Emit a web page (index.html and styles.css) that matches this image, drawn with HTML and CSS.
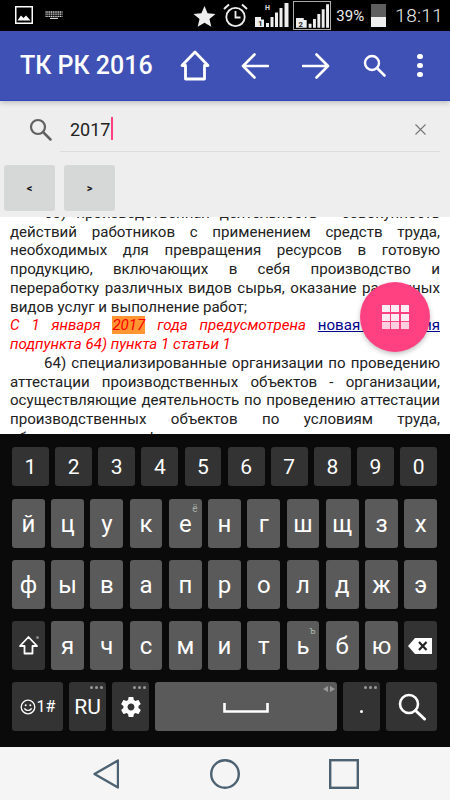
FILE: index.html
```html
<!DOCTYPE html>
<html lang="ru">
<head>
    <meta charset="UTF-8">
    <meta name="viewport" content="width=device-width, initial-scale=1.0">
    <title>ТК РК 2016</title>
    <link rel="stylesheet" href="styles.css">
</head>
<body>
    <div class="status">
        <svg class="st-pic" viewBox="0 0 18 18"><rect x="0.75" y="0.75" width="16.5" height="16.5" fill="none" stroke="#fff" stroke-width="1.5"/><path d="M2.5 14.5 L6 9.5 L8.5 12 L11 9.5 L15.5 14.5Z" fill="#fff"/></svg>
        <svg class="st-kbd" viewBox="0 0 18 8"><path d="M.5 1h17M.5 3.200h17M.5 5.400h17" stroke="#ddd" stroke-width="1.300" stroke-dasharray="1.200 .6"/><path d="M5 7.400h8" stroke="#ddd" stroke-width="1.100"/></svg>
        <div class="st-space"></div>
        <svg class="st-star" viewBox="0 0 24 24"><path d="M12 1 L15.2 8.6 L23.5 9.3 L17.2 14.7 L19.1 22.8 L12 18.5 L4.9 22.8 L6.8 14.7 L.5 9.3 L8.8 8.6Z" fill="#eee"/></svg>
        <svg class="st-alarm" viewBox="0 0 25 25"><circle cx="12.5" cy="14" r="9.2" fill="none" stroke="#eee" stroke-width="1.8"/><path d="M12.5 8v6.5h5" fill="none" stroke="#eee" stroke-width="1.8"/><path d="M1 6 L6 1.5M24 6 L19 1.5" stroke="#eee" stroke-width="2"/></svg>
        <svg class="st-sig" viewBox="0 0 34 24"><path d="M0 14h6v2.500h3V24H0z" fill="#eee"/><text x="3" y="23" class="st-simno">1</text><path d="M11 20h3v4h-3zM15.500 14h3v10h-3zM20 9.500h3V24h-3zM24.500 5h3v19h-3zM29.500 0h4v24h-4z" fill="#eee"/><text x="10" y="7" class="st-h">H</text></svg>
        <div class="st-box">
            <svg class="st-sig2" viewBox="0 0 34 24"><path d="M0 14h8v2h3v8H0z" fill="#eee"/><text x="2.500" y="23" class="st-simno">2</text><path d="M13 20h3v4h-3zM17.500 15h3v9h-3zM22 10h3v14h-3zM26.500 5h3v19h-3zM31 0h3v24h-3z" fill="#eee"/></svg>
        </div>
        <span class="st-pct">39%</span>
        <div class="st-batt"><div class="st-batt-top"></div><div class="st-batt-full"></div></div>
        <span class="st-time">18:11</span>
    </div>

    <div class="appbar">
        <span class="app-title">ТК РК 2016</span>
        <svg class="ic-home" viewBox="0 0 30 31"><path d="M15 2 L2 15.500 H5.500 V29 H24.500 V15.500 H28Z" fill="none" stroke="#fff" stroke-width="2.800" stroke-linejoin="round"/></svg>
        <svg class="ic-back" viewBox="0 0 28 26"><path d="M27 13H2M13.500 1.500 L2 13 L13.500 24.500" fill="none" stroke="#fff" stroke-width="2.600" stroke-linecap="round" stroke-linejoin="round"/></svg>
        <svg class="ic-fwd" viewBox="0 0 28 26"><path d="M1 13H26M14.500 1.500 L26 13 L14.500 24.500" fill="none" stroke="#fff" stroke-width="2.600" stroke-linecap="round" stroke-linejoin="round"/></svg>
        <svg class="ic-find" viewBox="0 0 23 23"><circle cx="9" cy="9" r="7" fill="none" stroke="#fff" stroke-width="2.400"/><path d="M14 14 L21.500 21.500" stroke="#fff" stroke-width="2.600" stroke-linecap="round"/></svg>
        <div class="dots"><i></i><i></i><i></i></div>
    </div>

    <div class="finder">
        <div class="find-row">
            <svg class="find-ic" viewBox="0 0 23 23"><circle cx="9" cy="9" r="7" fill="none" stroke="#616161" stroke-width="2.200"/><path d="M14 14 L21.500 21.500" stroke="#616161" stroke-width="2.500" stroke-linecap="round"/></svg>
            <div class="find-field">
                <span class="find-text">2017</span><span class="cursor"></span>
                <svg class="find-x" viewBox="0 0 11 11"><path d="M.5 .5 L10.500 10.500M10.500 .5 L.5 10.500" stroke="#757575" stroke-width="1.100"/></svg>
            </div>
        </div>
        <div class="find-btns">
            <div class="find-btn">&lt;</div>
            <div class="find-btn">&gt;</div>
        </div>
    </div>

    <div class="doc">
        <div class="doc-text">
            <p class="para">63) производственная деятельность - совокупность действий работников с применением средств труда, необходимых для превращения ресурсов в готовую продукцию, включающих в себя производство и переработку различных видов сырья, оказание различных видов услуг и выполнение работ;</p>
            <p class="note"><em>С 1 января <span class="hit">2017</span> года предусмотрена</em> <a class="doc-link" href="#">новая редакция</a> <em>подпункта 64) пункта 1 статьи 1</em></p>
            <p class="para">64) специализированные организации по проведению аттестации производственных объектов - организации, осуществляющие деятельность по проведению аттестации производственных объектов по условиям труда, обладающие сертификатом на право</p>
        </div>
        <div class="fab">
            <div class="fab-grid"><i></i><i></i><i></i><i></i><i></i><i></i><i class="faded"></i><i class="faded"></i><i class="faded"></i></div>
        </div>
    </div>

    <div class="kb">
        <div class="kb-row kb-nums">
            <div class="key dark">1</div><div class="key dark">2</div><div class="key dark">3</div><div class="key dark">4</div><div class="key dark">5</div>
            <div class="key dark">6</div><div class="key dark">7</div><div class="key dark">8</div><div class="key dark">9</div><div class="key dark">0</div>
        </div>
        <div class="kb-row">
            <div class="key">й</div><div class="key">ц</div><div class="key">у</div><div class="key">к</div><div class="key">е<span class="hint">ё</span></div><div class="key">н</div>
            <div class="key">г</div><div class="key">ш</div><div class="key">щ</div><div class="key">з</div><div class="key">х</div>
        </div>
        <div class="kb-row">
            <div class="key">ф</div><div class="key">ы</div><div class="key">в</div><div class="key">а</div><div class="key">п</div><div class="key">р</div>
            <div class="key">о</div><div class="key">л</div><div class="key">д</div><div class="key">ж</div><div class="key">э</div>
        </div>
        <div class="kb-row">
            <div class="key dark">
                <svg class="k-shift" viewBox="0 0 19 19"><path d="M9.500 1 L18 10 H13.500 V17.500 H5.500 V10 H1Z" fill="none" stroke="#fff" stroke-width="1.800" stroke-linejoin="round"/></svg>
                <span class="shift-dot"></span>
            </div>
            <div class="key">я</div><div class="key">ч</div><div class="key">с</div><div class="key">м</div><div class="key">и</div>
            <div class="key">т</div><div class="key">ь<span class="hint">ъ</span></div><div class="key">б</div><div class="key">ю</div>
            <div class="key dark">
                <svg class="k-del" viewBox="0 0 24 16"><path d="M7 0H24V16H7L0 8Z" fill="#fff"/><path d="M11 4 L18.500 12M18.500 4 L11 12" stroke="#222" stroke-width="2.200"/></svg>
            </div>
        </div>
        <div class="kb-row kb-bottom">
            <div class="key dark k-sym">
                <svg class="k-smile" viewBox="0 0 16 16"><circle cx="8" cy="8" r="6.800" fill="none" stroke="#fff" stroke-width="1.300"/><circle cx="5.700" cy="6.300" r="1" fill="#fff"/><circle cx="10.300" cy="6.300" r="1" fill="#fff"/><path d="M4.300 9.500 Q8 13.500 11.700 9.500" fill="none" stroke="#fff" stroke-width="1.200"/></svg>
                <span>1#</span>
            </div>
            <div class="key dark k-small k-ru">RU<span class="more"><i></i><i></i><i></i></span></div>
            <div class="key dark k-small">
                <svg class="k-gear" viewBox="0 0 24 24"><path fill="#fff" d="M19.400 13c.04-.3.1-.7.1-1s-.03-.7-.1-1l2.100-1.650c.2-.15.250-.4.120-.640l-2-3.460c-.12-.22-.4-.3-.6-.22l-2.500 1c-.5-.4-1.100-.7-1.700-1l-.4-2.650C14.400 2.200 14.200 2 14 2h-4c-.250 0-.460.180-.5.420l-.4 2.650c-.6.250-1.200.6-1.700 1l-2.500-1c-.2-.080-.5 0-.6.220l-2 3.460c-.130.220-.070.490.120.640L4.500 11c-.04.3-.1.700-.1 1s.04.7.1 1l-2.100 1.650c-.2.150-.250.420-.120.640l2 3.460c.12.220.4.300.6.220l2.500-1c.5.400 1.100.700 1.700 1l.4 2.650c.04.240.250.420.5.420h4c.250 0 .460-.180.500-.420l.4-2.650c.6-.250 1.200-.600 1.700-1l2.500 1c.220.080.5 0 .6-.220l2-3.460c.12-.220.070-.490-.120-.640zM12 15.500c-1.900 0-3.500-1.600-3.500-3.500s1.600-3.500 3.500-3.500 3.500 1.600 3.500 3.500-1.600 3.500-3.500 3.500z"/></svg>
                <span class="more"><i></i><i></i><i></i></span>
            </div>
            <div class="key k-space">
                <svg class="k-bar" viewBox="0 0 46 10"><path d="M1.500 0V8.500H44.500V0" fill="none" stroke="#fff" stroke-width="2.600"/></svg>
                <span class="arrows"><b class="arr-l"></b><b class="arr-r"></b></span>
            </div>
            <div class="key dark k-small k-dot"><span class="dot"></span><span class="more"><i></i><i></i><i></i></span></div>
            <div class="key dark k-go">
                <svg class="k-search" viewBox="0 0 28 28"><circle cx="11" cy="11" r="9" fill="none" stroke="#fff" stroke-width="2.600"/><path d="M17.500 17.500 L26.500 26" stroke="#fff" stroke-width="3" stroke-linecap="round"/></svg>
            </div>
        </div>
    </div>

    <div class="navbar">
        <svg class="nav-back" viewBox="0 0 26 30"><path d="M1.500 15 L25 1.500 V28.500Z" fill="none" stroke="#4c6272" stroke-width="2.400" stroke-linejoin="round"/></svg>
        <svg class="nav-home" viewBox="0 0 30 30"><circle cx="15" cy="15" r="13.800" fill="none" stroke="#4c6272" stroke-width="2.400"/></svg>
        <svg class="nav-recent" viewBox="0 0 30 30"><rect x="1.200" y="1.200" width="27.600" height="27.600" fill="none" stroke="#4c6272" stroke-width="2.400"/></svg>
    </div>
</body>
</html>
```

FILE: styles.css
```css
html, body
{
    margin: 0;
    padding: 0;
}
body
{
    width: 450px;
    height: 800px;
    overflow: hidden;
    display: flex;
    flex-direction: column;
    font-family: Roboto, "Noto Sans", sans-serif;
    background-color: #f5f5f5;
}
svg
{
    display: block;
    flex: none;
}

/* status bar */
.status
{
    height: 31px;
    background-color: black;
    color: #eee;
    display: flex;
    align-items: center;
    padding: 0 7px 0 15px;
    flex: none;
}
.st-pic
{
    width: 18px;
    height: 18px;
    margin-top: -1px;
}
.st-kbd
{
    width: 18px;
    height: 8px;
    margin-left: 12px;
    margin-top: -1px;
}
.st-space
{
    flex: 1;
}
.st-star
{
    width: 23px;
    height: 23px;
    margin-right: 7px;
    margin-top: 1px;
}
.st-alarm
{
    width: 25px;
    height: 25px;
    margin-right: 7px;
}
.st-sig
{
    width: 34px;
    height: 24px;
    margin-right: 4px;
    margin-top: -1px;
}
.st-simno
{
    font-size: 8px;
    font-weight: 700;
    fill: #222;
}
.st-h
{
    font-size: 7px;
    font-weight: 700;
    fill: #ddd;
}
.st-box
{
    width: 36px;
    height: 27px;
    border: 1px solid #aaa;
    display: flex;
    align-items: center;
    justify-content: center;
    margin-right: 5px;
}
.st-sig2
{
    width: 33px;
    height: 24px;
}
.st-pct
{
    font-size: 15px;
    width: 30px;
    margin-right: 5px;
}
.st-batt
{
    width: 15px;
    height: 23px;
    display: flex;
    flex-direction: column;
    margin-right: 9px;
}
.st-batt-top
{
    height: 13px;
    background-color: #5e5e5e;
}
.st-batt-full
{
    height: 10px;
    background-color: #eee;
}
.st-time
{
    font-size: 19px;
    font-weight: 300;
    letter-spacing: 0.3px;
}

/* app bar */
.appbar
{
    height: 70px;
    background-color: #3f51b5;
    border-bottom: 1px solid #2f46c0;
    box-sizing: border-box;
    color: white;
    display: flex;
    align-items: center;
    padding-left: 20px;
    flex: none;
    position: relative;
    z-index: 2;
    box-shadow: 0 2px 5px rgba(0,0,0,0.2);
}
.app-title
{
    font-size: 25px;
    font-weight: 500;
    width: 160px;
}
.ic-home
{
    width: 30px;
    height: 31px;
    margin-right: 31px;
}
.ic-back, .ic-fwd
{
    width: 28px;
    height: 26px;
    margin-right: 33px;
}
.ic-find
{
    width: 23px;
    height: 23px;
    margin-right: 31px;
}
.dots
{
    display: flex;
    flex-direction: column;
    gap: 3.500px;
}
.dots i
{
    display: block;
    width: 5.500px;
    height: 5.500px;
    border-radius: 50%;
    background-color: white;
}

/* find in page */
.finder
{
    height: 116px;
    background-color: #eeeeee;
    flex: none;
}
.find-row
{
    height: 51px;
    display: flex;
}
.find-ic
{
    width: 23px;
    height: 23px;
    margin: 17px 8px 0 29px;
}
.find-field
{
    width: 380px;
    border-bottom: 1px solid #dcdcdc;
    display: flex;
    align-items: center;
    padding: 6px 14px 0 10px;
    box-sizing: border-box;
}
.find-text
{
    font-size: 18px;
    color: #222;
}
.cursor
{
    width: 1.500px;
    height: 23px;
    background-color: #ff4081;
    margin-left: 1px;
    margin-top: -2px;
}
.find-x
{
    width: 11px;
    height: 11px;
    margin-left: auto;
}
.find-btns
{
    display: flex;
    gap: 9px;
    padding: 13px 0 0 4px;
}
.find-btn
{
    width: 51px;
    height: 46px;
    background-color: #d6d7d7;
    border-radius: 3px;
    font-size: 11px;
    font-weight: 700;
    color: #111;
    display: flex;
    align-items: center;
    justify-content: center;
}

/* document */
.doc
{
    height: 217px;
    background-color: white;
    overflow: hidden;
    position: relative;
    flex: none;
}
.doc-text
{
    margin-top: -13px;
    padding: 0 10px;
    font-size: 15.100px;
    line-height: 18.730px;
    color: #222;
    text-align: justify;
}
.para
{
    margin: 0;
    text-indent: 34px;
}
.note
{
    margin: 0;
    color: red;
}
.hit
{
    background-color: #ff9632;
}
.doc-link
{
    color: #00008b;
}
.fab
{
    position: absolute;
    left: 360px;
    top: 65px;
    width: 70px;
    height: 70px;
    border-radius: 50%;
    background-color: #ff4081;
    box-shadow: 0 2px 5px rgba(0,0,0,0.25);
    display: flex;
    align-items: center;
    justify-content: center;
}
.fab-grid
{
    display: grid;
    grid-template-columns: repeat(3, 8px);
    grid-auto-rows: 7px;
    gap: 1.500px;
}
.fab-grid i
{
    background-color: white;
    opacity: 0.9;
}
.fab-grid .faded
{
    opacity: 0.75;
}

/* keyboard */
.kb
{
    height: 313px;
    box-sizing: border-box;
    background-color: #0a0a0a;
    padding: 13px 13px 0 12px;
    display: flex;
    flex-direction: column;
    gap: 12px;
    flex: none;
}
.kb-row
{
    height: 49px;
    display: flex;
    gap: 6.500px;
}
.kb-nums
{
    height: 39px;
    gap: 6.200px;
    margin-bottom: 1px;
}
.key
{
    flex: 1 1 0;
    min-width: 0;
    background-color: #5a5a5a;
    border-radius: 3px;
    color: white;
    font-size: 24px;
    display: flex;
    align-items: center;
    justify-content: center;
    position: relative;
}
.key.dark
{
    background-color: #333333;
}
.kb-nums .key
{
    font-size: 21px;
}
.hint
{
    position: absolute;
    right: 4px;
    top: 4px;
    font-size: 10px;
    color: #a5b0a5;
}
.k-shift
{
    width: 19px;
    height: 19px;
}
.shift-dot
{
    position: absolute;
    right: 6px;
    top: 15px;
    width: 3px;
    height: 3px;
    border-radius: 50%;
    background-color: #888;
}
.k-del
{
    width: 24px;
    height: 16px;
    margin-left: -1px;
}
.kb-bottom
{
    gap: 6px;
}
.kb-bottom .key
{
    flex: none;
}
.k-sym
{
    width: 51px;
    font-size: 16px;
    gap: 1px;
}
.k-smile
{
    width: 16px;
    height: 16px;
}
.k-small
{
    width: 37px;
}
.k-ru
{
    font-size: 21px;
}
.k-gear
{
    width: 24px;
    height: 24px;
}
.k-space
{
    width: 182px;
}
.k-bar
{
    width: 46px;
    height: 10px;
    margin-top: 3px;
}
.k-go
{
    width: 51px;
}
.k-search
{
    width: 28px;
    height: 28px;
}
.k-dot .dot
{
    width: 3px;
    height: 3px;
    background-color: white;
    border-radius: 50%;
    margin-top: 10px;
}
.more
{
    position: absolute;
    top: 4px;
    right: 3px;
    display: flex;
    gap: 2px;
}
.more i
{
    display: block;
    width: 3px;
    height: 3px;
    border-radius: 50%;
    background-color: #999;
}
.arrows
{
    position: absolute;
    top: 4px;
    right: 2px;
    display: flex;
    gap: 2px;
}
.arrows b
{
    width: 0;
    height: 0;
    border-top: 3px solid transparent;
    border-bottom: 3px solid transparent;
}
.arr-l
{
    border-right: 5px solid #999;
}
.arr-r
{
    border-left: 5px solid #999;
}

/* nav bar */
.navbar
{
    flex: 1;
    background-color: #f5f5f5;
    display: flex;
    align-items: center;
    padding-left: 93px;
}
.nav-back
{
    width: 26px;
    height: 30px;
}
.nav-home
{
    width: 30px;
    height: 30px;
    margin-left: 91px;
}
.nav-recent
{
    width: 30px;
    height: 30px;
    margin-left: 89px;
}
```
